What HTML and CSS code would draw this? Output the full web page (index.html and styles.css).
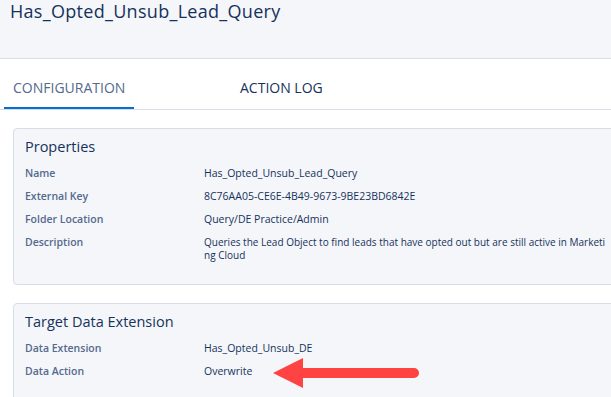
FILE: index.html
```html
<!DOCTYPE html>
<html lang="en">
<head>
  <meta charset="UTF-8" />
  <title>Has_Opted_Unsub_Lead_Query</title>
  <link rel="stylesheet" href="styles.css">
</head>
<body>
  <!-- page header -->
  <div class="page-header">
    <h1>Has_Opted_Unsub_Lead_Query</h1>
  </div>

  <!-- tabs -->
  <div class="tabs">
    <div class="tab active">CONFIGURATION</div>
    <div class="tab">ACTION LOG</div>
  </div>

  <div class="content">
    <div class="panel">
      <h2>Properties</h2>
      <div class="row">
        <div class="label">Name</div>
        <div class="value">Has_Opted_Unsub_Lead_Query</div>
      </div>
      <div class="row">
        <div class="label">External Key</div>
        <div class="value">8C76AA05-CE6E-4B49-9673-9BE23BD6842E</div>
      </div>
      <div class="row">
        <div class="label">Folder Location</div>
        <div class="value">Query/DE Practice/Admin</div>
      </div>
      <div class="row">
        <div class="label">Description</div>
        <div class="value wrap">Queries the Lead Object to find leads that have opted out but are still active in Marketing Cloud</div>
      </div>
    </div>

    <div class="panel target">
      <h2>Target Data Extension</h2>
      <div class="row">
        <div class="label">Data Extension</div>
        <div class="value">Has_Opted_Unsub_DE</div>
      </div>
      <div class="row">
        <div class="label">Data Action</div>
        <div class="value">Overwrite</div>
      </div>

      <!-- annotation arrow -->
      <svg class="arrow" width="160" height="32" viewBox="0 0 160 32">
        <path d="M0 15 L30 0 L30 10 L141 10 A5 5 0 0 1 141 20 L30 20 L30 30 Z" fill="#ff4343"/>
      </svg>
    </div>
  </div>
</body>
</html>
```

FILE: styles.css
```css
body {
  margin: 0;
  font-family: "Open Sans", "Noto Sans", sans-serif;
  color: #16325c;
  background: #ffffff;
  overflow: hidden;
}

.page-header {
  height: 58px;
  background-color: #f4f6f9;
  border-bottom: 1px solid #d8dde6;
  padding-left: 10px;
}

.page-header h1 {
  margin: 0;
  font-size: 18px;
  letter-spacing: 0.3px;
  font-weight: 400;
  line-height: 22px;
  color: #16325c;
}

.tabs {
  display: flex;
  height: 50px;
  border-bottom: 1px solid #d8dde6;
  padding-left: 4px;
}

.tab {
  font-size: 14px;
  line-height: 20px;
  padding: 19px 9px 0;
  color: #16325c;
}

.tab.active {
  width: 112px;
  color: #54698d;
  border-bottom: 2px solid #0070d2;
  margin-bottom: -1px;
  height: 29px;
}

.tab + .tab {
  margin-left: 97px;
}

.content {
  padding: 18px 0 0 13px;
}

.panel {
  position: relative;
  width: 640px;
  background-color: #f4f6f9;
  border: 1px solid #d8dde6;
  border-radius: 4px;
  padding: 8px 11px 17px;
}

.panel.target {
  margin-top: 18px;
}

.panel h2 {
  margin: 0 0 5px;
  font-size: 14.5px;
  font-weight: 400;
  line-height: 20px;
  color: #16325c;
}

.row {
  display: flex;
  font-size: 10.5px;
  line-height: 13px;
  padding: 5px 0;
}

.target .row:first-of-type {
  margin-top: 1px;
}

.label {
  width: 179px;
  flex-shrink: 0;
  color: #54698d;
  font-weight: 600;
}

.value {
  color: #16325c;
}

.value.wrap {
  width: 402px;
  font-size: 10px;
  word-break: break-all;
}

.arrow {
  position: absolute;
  left: 259px;
  top: 54px;
}
```
